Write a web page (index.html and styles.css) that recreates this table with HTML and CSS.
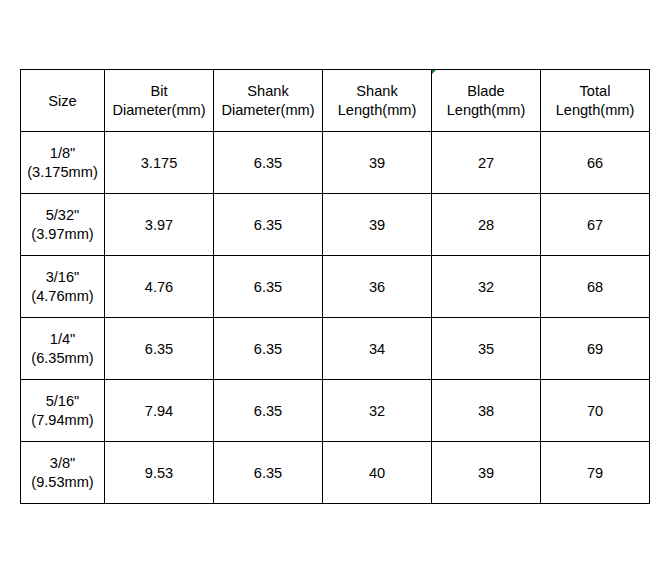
FILE: index.html
```html
<!DOCTYPE html>
<html>
<head>
<meta charset="utf-8">
<link rel="stylesheet" href="styles.css">
</head>
<body>
<table class="spec">
  <colgroup>
    <col class="c-size"><col class="c-num"><col class="c-num"><col class="c-num"><col class="c-num"><col class="c-num">
  </colgroup>
  <tr>
    <td>Size</td>
    <td>Bit<br>Diameter(mm)</td>
    <td>Shank<br>Diameter(mm)</td>
    <td>Shank<br>Length(mm)</td>
    <td class="marked">Blade<br>Length(mm)</td>
    <td>Total<br>Length(mm)</td>
  </tr>
  <tr><td>1/8"<br>(3.175mm)</td><td>3.175</td><td>6.35</td><td>39</td><td>27</td><td>66</td></tr>
  <tr><td>5/32"<br>(3.97mm)</td><td>3.97</td><td>6.35</td><td>39</td><td>28</td><td>67</td></tr>
  <tr><td>3/16"<br>(4.76mm)</td><td>4.76</td><td>6.35</td><td>36</td><td>32</td><td>68</td></tr>
  <tr><td>1/4"<br>(6.35mm)</td><td>6.35</td><td>6.35</td><td>34</td><td>35</td><td>69</td></tr>
  <tr><td>5/16"<br>(7.94mm)</td><td>7.94</td><td>6.35</td><td>32</td><td>38</td><td>70</td></tr>
  <tr><td>3/8"<br>(9.53mm)</td><td>9.53</td><td>6.35</td><td>40</td><td>39</td><td>79</td></tr>
</table>
</body>
</html>
```
FILE: styles.css
```css
html, body {
  margin: 0;
  padding: 0;
  background: #fff;
}
body {
  padding: 69px 0 0 20px;
  font-family: "Liberation Sans", Arial, sans-serif;
  font-size: 14.6px;
  color: #000;
}
.spec {
  border-collapse: collapse;
  table-layout: fixed;
  width: 630px;
}
.c-size { width: 84px; }
.c-num { width: 109px; }
.spec td {
  border: 1px solid #000;
  height: 60px;
  padding: 1px 0 0;
  text-align: center;
  vertical-align: middle;
  line-height: 19px;
}
.spec td.marked {
  position: relative;
}
.spec td.marked::before {
  content: "";
  position: absolute;
  left: 0;
  top: 0;
  width: 0;
  height: 0;
  border-top: 4px solid #1e7d32;
  border-right: 4px solid transparent;
}
```
